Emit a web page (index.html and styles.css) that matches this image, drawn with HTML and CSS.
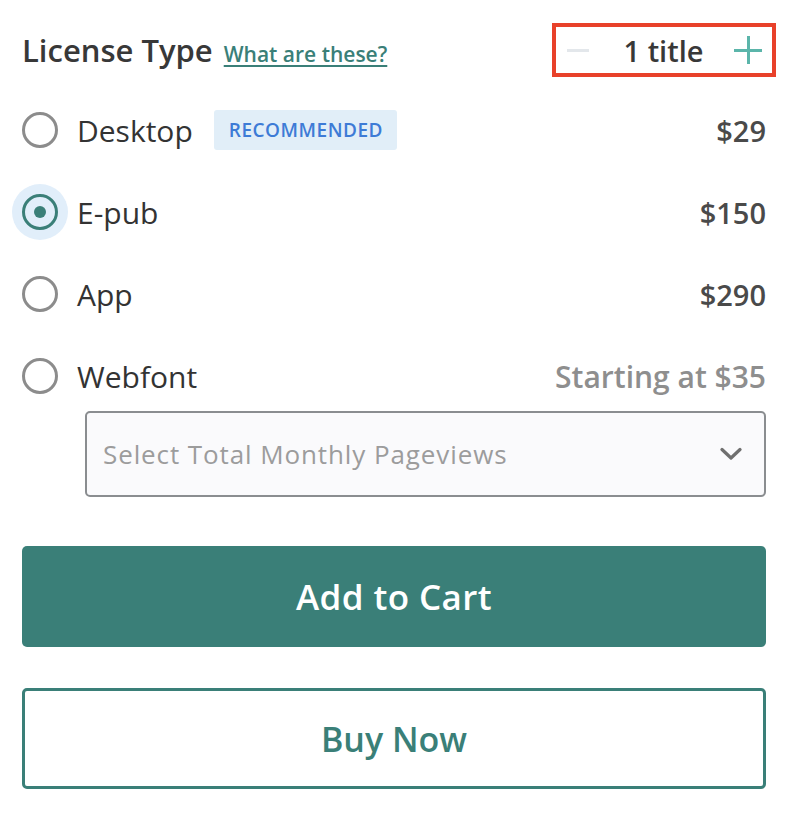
FILE: index.html
```html
<!DOCTYPE html>
<html lang="en">
<head>
<meta charset="utf-8">
<title>License Type</title>
<link rel="stylesheet" href="styles.css">
</head>
<body>
<div class="panel">
  <div class="header">
    <div class="title-wrap">
      <span class="title">License Type</span>
      <a class="help" href="#">What are these?</a>
    </div>
    <div class="counter">
      <span class="minus"></span>
      <span class="count">1 title</span>
      <span class="plus"></span>
    </div>
  </div>

  <div class="options">
    <div class="row">
      <span class="radio"><span class="ring"></span></span>
      <span class="label">Desktop</span>
      <span class="badge">RECOMMENDED</span>
      <span class="price">$29</span>
    </div>
    <div class="row">
      <span class="radio selected"><span class="ring"></span></span>
      <span class="label">E-pub</span>
      <span class="price">$150</span>
    </div>
    <div class="row">
      <span class="radio"><span class="ring"></span></span>
      <span class="label">App</span>
      <span class="price">$290</span>
    </div>
    <div class="row">
      <span class="radio"><span class="ring"></span></span>
      <span class="label">Webfont</span>
      <span class="price muted">Starting at $35</span>
    </div>
  </div>

  <div class="select">
    <span class="placeholder">Select Total Monthly Pageviews</span>
    <svg class="chevron" width="22" height="14" viewBox="0 0 22 14"><path d="M2 2.5 L11 11 L20 2.5" fill="none" stroke="#6f6f6f" stroke-width="3.2" stroke-linecap="round" stroke-linejoin="round"/></svg>
  </div>

  <button class="btn primary">Add to Cart</button>
  <button class="btn secondary">Buy Now</button>
</div>
</body>
</html>
```
FILE: styles.css
```css
* { box-sizing: border-box; }
html, body { margin: 0; padding: 0; background: #fff; }
body {
  font-family: "Open Sans", Lato, "Liberation Sans", sans-serif;
  color: #333;
}
.panel {
  padding: 23px 28px 0 22px;
  display: flex;
  flex-direction: column;
}
.header {
  display: flex;
  align-items: center;
  justify-content: space-between;
  height: 54px;
}
.title-wrap { display: flex; align-items: baseline; gap: 11px; }
.title { font-size: 31px; font-weight: 600; color: #383838; }
.help {
  font-size: 21px; font-weight: 600; color: #3a7f78;
  text-decoration: underline; text-decoration-thickness: 2px; text-underline-offset: 3px;
}
.counter {
  width: 224px; height: 54px;
  margin-right: -10px;
  border: 4px solid #e8412a;
  display: flex; align-items: center; justify-content: space-between;
  padding: 0 10px 0 11px;
}
.minus { width: 22px; height: 3px; background: #e3e7eb; }
.count { font-size: 29px; font-weight: 600; color: #383838; margin-left: 4px; }
.plus { width: 28px; height: 28px; position: relative; }
.plus::before, .plus::after {
  content: ""; position: absolute; background: #5bb5aa;
}
.plus::before { left: 0; right: 0; top: 12.5px; height: 3px; }
.plus::after { top: 0; bottom: 0; left: 12.5px; width: 3px; }

.options {
  display: flex; flex-direction: column; gap: 26px;
  margin-top: 25px;
}
.row {
  display: flex; align-items: center; height: 56px;
}
.radio {
  width: 56px; height: 56px; margin-left: -10px;
  border-radius: 50%;
  display: flex; align-items: center; justify-content: center;
  flex: none;
}
.ring {
  width: 36px; height: 36px; border-radius: 50%;
  border: 3px solid #8c8c8c;
  display: flex; align-items: center; justify-content: center;
}
.radio.selected { background: #e1eefa; }
.radio.selected .ring { border-color: #3a7f78; }
.radio.selected .ring::after {
  content: ""; width: 12px; height: 12px; border-radius: 50%; background: #3a7f78;
}
.label { margin-left: 9px; font-size: 30px; color: #333; }
.badge {
  margin-left: 21px;
  background: #e1eef8; color: #3d7bd6;
  font-size: 19px; font-weight: 600; letter-spacing: 0.5px;
  padding: 0 14px 0 15px; height: 40px; line-height: 40px; border-radius: 3px;
}
.price { margin-left: auto; font-size: 29px; font-weight: 600; color: #4a4a4a; }
.price.muted { color: #8e8e8e; font-size: 30px; }

.select {
  margin: 7px 0 0 63px;
  height: 86px;
  border: 2px solid #8a8d90; border-radius: 5px;
  background: #fafafc;
  display: flex; align-items: center; justify-content: space-between;
  padding: 0 22px 0 16px;
}
.placeholder { font-size: 26px; color: #9c9c9c; letter-spacing: 0.9px; }

.btn {
  display: block; width: 100%; height: 101px;
  font-family: inherit; font-weight: 600;
  border-radius: 5px; cursor: pointer;
}
.primary { margin-top: 49px; background: #3a7f78; color: #fff; border: none; font-size: 35px; letter-spacing: 0.4px; }
.secondary { margin-top: 41px; background: #fff; color: #3a7f78; border: 3px solid #3a7f78; font-size: 34px; }
```
